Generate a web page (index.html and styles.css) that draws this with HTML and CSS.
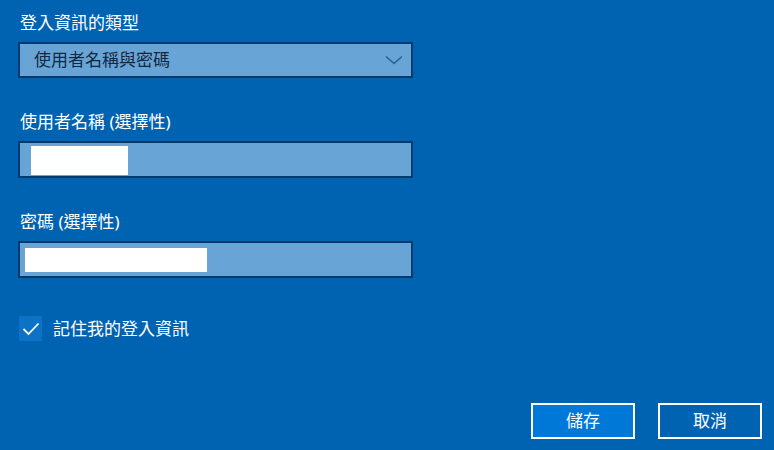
FILE: index.html
```html
<!DOCTYPE html>
<html lang="zh-Hant">
<head>
<meta charset="utf-8">
<link rel="stylesheet" href="styles.css">
</head>
<body>
<div class="page">
  <div class="label first">登入資訊的類型</div>
  <div class="field select">
    <span class="select-text">使用者名稱與密碼</span>
    <svg class="chevron" width="18" height="10" viewBox="0 0 18 10"><path d="M1 1.5 L9 8.5 L17 1.5" fill="none" stroke="#2b5f8e" stroke-width="1.4"/></svg>
  </div>

  <div class="label">使用者名稱 (選擇性)</div>
  <div class="field">
    <div class="redact redact-user"></div>
  </div>

  <div class="label">密碼 (選擇性)</div>
  <div class="field">
    <div class="redact redact-pass"></div>
  </div>

  <div class="check-row">
    <div class="checkbox">
      <svg width="18" height="14" viewBox="0 0 18 14"><path d="M1.5 7 L6.5 12 L16.5 1.5" fill="none" stroke="#ffffff" stroke-width="1.8"/></svg>
    </div>
    <span class="check-label">記住我的登入資訊</span>
  </div>

  <div class="footer">
    <button class="btn primary">儲存</button>
    <button class="btn">取消</button>
  </div>
</div>
</body>
</html>
```

FILE: styles.css
```css
html, body {
  margin: 0;
  padding: 0;
  background: #0063b1;
}
body {
  font-family: "Noto Sans", "Noto Sans CJK TC", sans-serif;
  font-size: 17px;
  color: #ffffff;
}
.page {
  box-sizing: border-box;
  height: 450px;
  padding: 11px 12px 11px 18px;
  display: flex;
  flex-direction: column;
}
.label {
  line-height: 24px;
  height: 24px;
  padding-left: 2px;
  margin-top: 32px;
  margin-bottom: 7px;
  white-space: nowrap;
}
.label.first {
  margin-top: 0;
}
.field {
  box-sizing: border-box;
  width: 395px;
  height: 37px;
  border: 2px solid #003b6f;
  background: #68a4d5;
  display: flex;
  align-items: center;
}
.select {
  height: 36px;
  justify-content: space-between;
  padding: 0 8px 0 14px;
}
.select-text {
  color: #13283d;
  line-height: 24px;
}
.chevron {
  display: block;
}
.redact {
  background: #ffffff;
}
.redact-user {
  margin-left: 11px;
  width: 97px;
  height: 29px;
  margin-top: 2px;
}
.redact-pass {
  margin-left: 5px;
  width: 182px;
  height: 24px;
}
.check-row {
  margin-top: 38px;
  display: flex;
  align-items: center;
  gap: 11px;
}
.checkbox {
  box-sizing: border-box;
  width: 23px;
  height: 25px;
  margin-left: 1px;
  background: #0b72c6;
  display: flex;
  align-items: center;
  justify-content: center;
}
.checkbox svg {
  display: block;
}
.check-label {
  line-height: 24px;
}
.footer {
  margin-top: auto;
  display: flex;
  justify-content: flex-end;
  gap: 23px;
}
.btn {
  box-sizing: border-box;
  width: 104px;
  height: 36px;
  border: 2px solid #ffffff;
  background: #0063b1;
  color: #ffffff;
  font-family: "Noto Sans", "Noto Sans CJK TC", sans-serif;
  font-size: 17px;
  padding: 0;
  line-height: 30px;
}
.btn.primary {
  background: #0078d7;
}
```
